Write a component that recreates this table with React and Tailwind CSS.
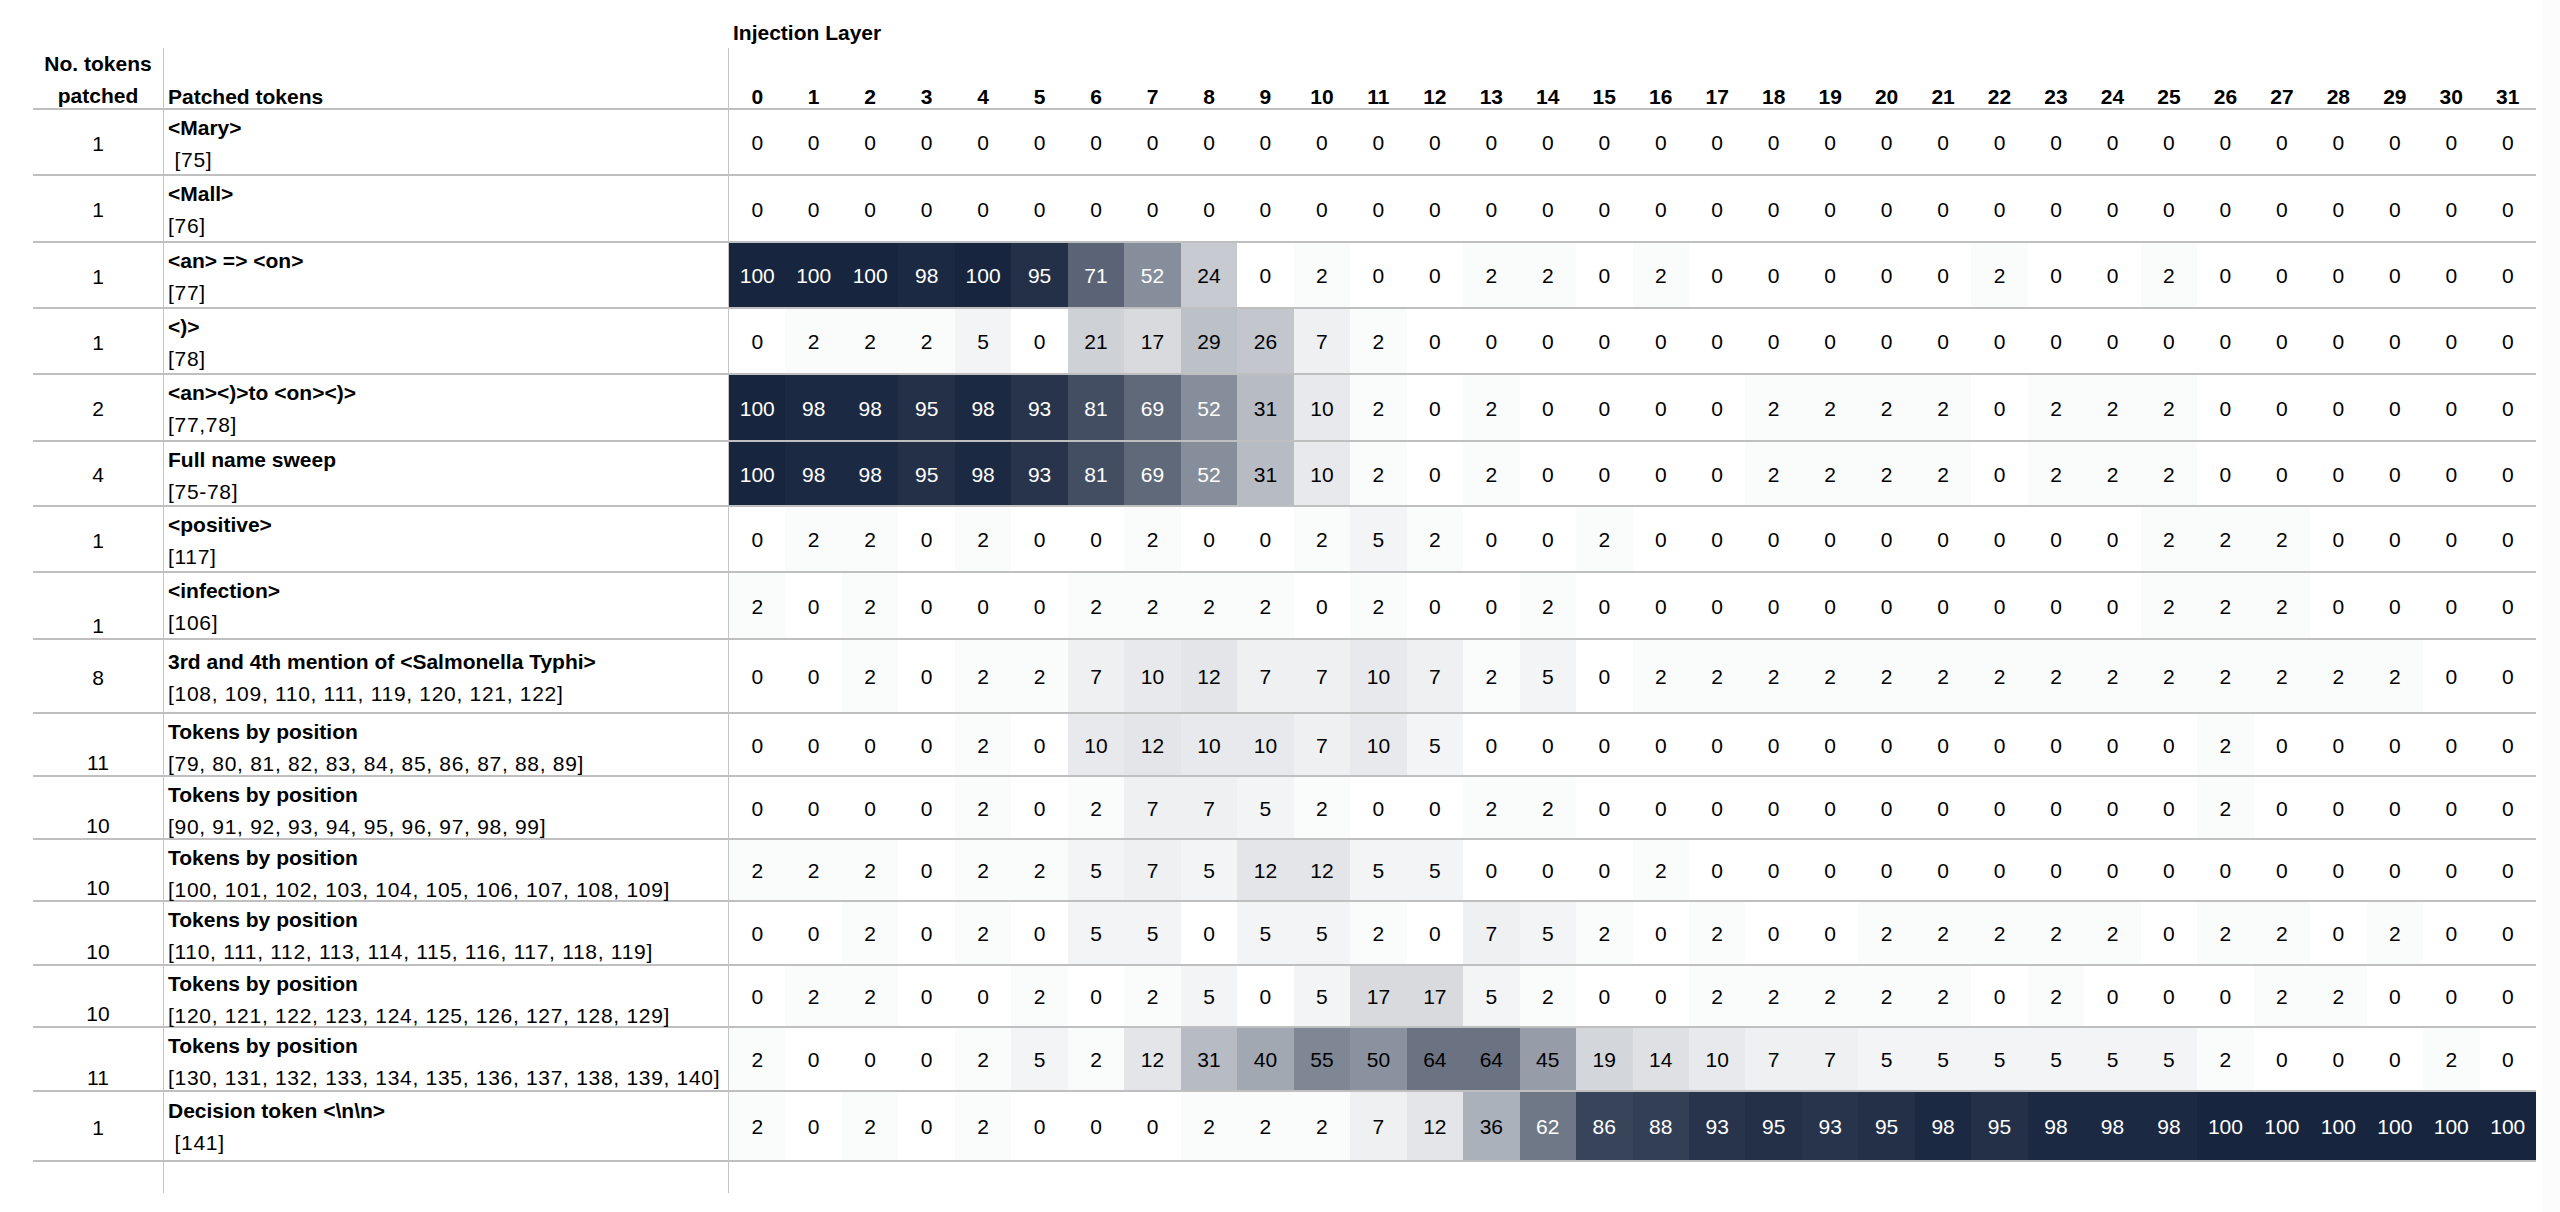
import React from 'react'

const rows = [
  { n: 1, label: '<Mary>', ids: ' [75]', h: 'h-[66px]', pt: 'pt-[2px]', nb: false,
    v: [0,0,0,0,0,0,0,0,0,0,0,0,0,0,0,0,0,0,0,0,0,0,0,0,0,0,0,0,0,0,0,0] },
  { n: 1, label: '<Mall>', ids: '[76]', h: 'h-[67px]', pt: 'pt-[2px]', nb: false,
    v: [0,0,0,0,0,0,0,0,0,0,0,0,0,0,0,0,0,0,0,0,0,0,0,0,0,0,0,0,0,0,0,0] },
  { n: 1, label: '<an> => <on>', ids: '[77]', h: 'h-[66px]', pt: 'pt-[2px]', nb: false,
    v: [100,100,100,98,100,95,71,52,24,0,2,0,0,2,2,0,2,0,0,0,0,0,2,0,0,2,0,0,0,0,0,0] },
  { n: 1, label: '<)>', ids: '[78]', h: 'h-[66px]', pt: 'pt-[2px]', nb: false,
    v: [0,2,2,2,5,0,21,17,29,26,7,2,0,0,0,0,0,0,0,0,0,0,0,0,0,0,0,0,0,0,0,0] },
  { n: 2, label: '<an><)>to <on><)>', ids: '[77,78]', h: 'h-[67px]', pt: 'pt-[2px]', nb: false,
    v: [100,98,98,95,98,93,81,69,52,31,10,2,0,2,0,0,0,0,2,2,2,2,0,2,2,2,0,0,0,0,0,0] },
  { n: 4, label: 'Full name sweep', ids: '[75-78]', h: 'h-[65px]', pt: 'pt-[2px]', nb: false,
    v: [100,98,98,95,98,93,81,69,52,31,10,2,0,2,0,0,0,0,2,2,2,2,0,2,2,2,0,0,0,0,0,0] },
  { n: 1, label: '<positive>', ids: '[117]', h: 'h-[66px]', pt: 'pt-[2px]', nb: false,
    v: [0,2,2,0,2,0,0,2,0,0,2,5,2,0,0,2,0,0,0,0,0,0,0,0,0,2,2,2,0,0,0,0] },
  { n: 1, label: '<infection>', ids: '[106]', h: 'h-[67px]', pt: 'pt-[2px]', nb: true,
    v: [2,0,2,0,0,0,2,2,2,2,0,2,0,0,2,0,0,0,0,0,0,0,0,0,0,2,2,2,0,0,0,0] },
  { n: 8, label: '3rd and 4th mention of <Salmonella Typhi>', ids: '[108, 109, 110, 111, 119, 120, 121, 122]', h: 'h-[74px]', pt: 'pt-[6px]', nb: false,
    v: [0,0,2,0,2,2,7,10,12,7,7,10,7,2,5,0,2,2,2,2,2,2,2,2,2,2,2,2,2,2,0,0] },
  { n: 11, label: 'Tokens by position', ids: '[79, 80, 81, 82, 83, 84, 85, 86, 87, 88, 89]', h: 'h-[63px]', pt: 'pt-[2px]', nb: true,
    v: [0,0,0,0,2,0,10,12,10,10,7,10,5,0,0,0,0,0,0,0,0,0,0,0,0,0,2,0,0,0,0,0] },
  { n: 10, label: 'Tokens by position', ids: '[90, 91, 92, 93, 94, 95, 96, 97, 98, 99]', h: 'h-[63px]', pt: 'pt-[2px]', nb: true,
    v: [0,0,0,0,2,0,2,7,7,5,2,0,0,2,2,0,0,0,0,0,0,0,0,0,0,0,2,0,0,0,0,0] },
  { n: 10, label: 'Tokens by position', ids: '[100, 101, 102, 103, 104, 105, 106, 107, 108, 109]', h: 'h-[62px]', pt: 'pt-[2px]', nb: true,
    v: [2,2,2,0,2,2,5,7,5,12,12,5,5,0,0,0,2,0,0,0,0,0,0,0,0,0,0,0,0,0,0,0] },
  { n: 10, label: 'Tokens by position', ids: '[110, 111, 112, 113, 114, 115, 116, 117, 118, 119]', h: 'h-[64px]', pt: 'pt-[2px]', nb: true,
    v: [0,0,2,0,2,0,5,5,0,5,5,2,0,7,5,2,0,2,0,0,2,2,2,2,2,0,2,2,0,2,0,0] },
  { n: 10, label: 'Tokens by position', ids: '[120, 121, 122, 123, 124, 125, 126, 127, 128, 129]', h: 'h-[62px]', pt: 'pt-[2px]', nb: true,
    v: [0,2,2,0,0,2,0,2,5,0,5,17,17,5,2,0,0,2,2,2,2,2,0,2,0,0,0,2,2,0,0,0] },
  { n: 11, label: 'Tokens by position', ids: '[130, 131, 132, 133, 134, 135, 136, 137, 138, 139, 140]', h: 'h-[64px]', pt: 'pt-[2px]', nb: true, dark: true,
    v: [2,0,0,0,2,5,2,12,31,40,55,50,64,64,45,19,14,10,7,7,5,5,5,5,5,5,2,0,0,0,2,0] },
  { n: 1, label: 'Decision token <\\n\\n>', ids: ' [141]', h: 'h-[70px]', pt: 'pt-[3px]', nb: false,
    v: [2,0,2,0,2,0,0,0,2,2,2,7,12,36,62,86,88,93,95,93,95,98,95,98,98,98,100,100,100,100,100,100] },
]

const layers = Array.from({ length: 32 }, (_, i) => i)

// white -> navy, on a fixed 0..100 scale
function shade(v) {
  const t = v / 100
  const mix = (a) => Math.round(255 - t * (255 - a))
  return `rgb(${mix(23)}, ${mix(37)}, ${mix(62)})`
}

export default function App() {
  return (
    <div className="flex min-h-screen bg-white font-['Liberation_Sans',Arial,sans-serif] text-[21px] text-black">
      <div className="ml-[33px] w-[2503px] shrink-0">
        {/* title */}
        <div className="flex h-[48px]">
          <div className="w-[695px]" />
          <div className="pl-[5px] pt-[22px] font-bold leading-[22px]">Injection Layer</div>
        </div>

        {/* header */}
        <div className="flex h-[62px] border-b-2 border-[#bfbfbf]">
          <div className="w-[130px] text-center font-bold leading-[32px]">
            No. tokens
            <br />
            patched
          </div>
          <div className="flex w-[565px] items-end border-l border-[#c4c4c4] pl-[4px] font-bold leading-[22px]">
            Patched tokens
          </div>
          <div className="grid w-[1808px] grid-cols-[repeat(32,minmax(0,1fr))] border-l border-[#c4c4c4]">
            {layers.map((i) => (
              <div key={i} className="flex items-end justify-center font-bold leading-[22px]">
                {i}
              </div>
            ))}
          </div>
        </div>

        {/* data rows */}
        {rows.map((r, ri) => (
          <div key={ri} className={`flex border-b-2 border-[#bfbfbf] ${r.h}`}>
            <div className={`flex w-[130px] justify-center ${r.nb ? 'items-end leading-[25px]' : 'items-center pt-[3px]'}`}>
              {r.n}
            </div>
            <div className={`flex w-[565px] flex-col border-l border-[#c4c4c4] pl-[4px] leading-[32px] ${r.pt}`}>
              <div className="whitespace-pre font-bold">{r.label}</div>
              <div className="whitespace-pre tracking-[0.7px]">{r.ids}</div>
            </div>
            <div className="grid w-[1808px] grid-cols-[repeat(32,minmax(0,1fr))] border-l border-[#c4c4c4]">
              {r.v.map((v, ci) => (
                <div
                  key={ci}
                  className={`flex items-center justify-center pt-[2px] ${v >= 50 && !r.dark ? 'text-white' : 'text-black'}`}
                  style={{ backgroundColor: shade(v) }}
                >
                  {v}
                </div>
              ))}
            </div>
          </div>
        ))}

        {/* empty tail */}
        <div className="flex h-[31px]">
          <div className="w-[130px]" />
          <div className="w-[565px] border-l border-[#c4c4c4]" />
          <div className="w-[1808px] border-l border-[#c4c4c4]" />
        </div>
      </div>
      <div className="ml-auto w-[18px] bg-[#fcfcfc]" />
    </div>
  )
}
